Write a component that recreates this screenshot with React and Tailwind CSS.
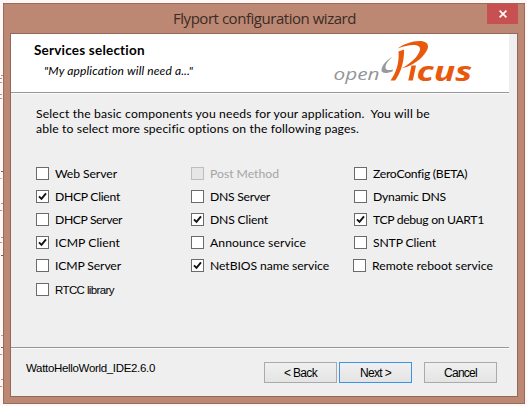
import { useLayoutEffect, useRef, useState } from "react";

// Tracks a label out so that it fills the given width.
function Label({ width, className = "", children }) {
  const ref = useRef(null);
  const [spacing, setSpacing] = useState(0);
  useLayoutEffect(() => {
    const natural = ref.current.getBoundingClientRect().width;
    setSpacing((width - natural) / children.length);
  }, []);
  return (
    <span ref={ref} className={`inline-block whitespace-pre ${className}`} style={{ letterSpacing: `${spacing}px` }}>
      {children}
    </span>
  );
}

const columns = [
  [
    { text: "Web Server", width: 62 },
    { text: "DHCP Client", width: 65, checked: true },
    { text: "DHCP Server", width: 67 },
    { text: "ICMP Client", width: 65, checked: true },
    { text: "ICMP Server", width: 66 },
    { text: "RTCC library", width: 59, plain: true },
  ],
  [
    { text: "Post Method", width: 69, disabled: true },
    { text: "DNS Server", width: 60 },
    { text: "DNS Client", width: 58, checked: true },
    { text: "Announce service", width: 96 },
    { text: "NetBIOS name service", width: 119, checked: true },
  ],
  [
    { text: "ZeroConfig (BETA)", width: 94 },
    { text: "Dynamic DNS", width: 73 },
    { text: "TCP debug on UART1", width: 111, checked: true },
    { text: "SNTP Client", width: 63 },
    { text: "Remote reboot service", width: 121, shifted: true },
  ],
];

function Option({ text, width, checked, disabled, plain, shifted }) {
  return (
    <div className={`flex h-[23px] items-start ${shifted ? "-ml-px" : ""} ${plain ? "mt-px" : ""}`}>
      <span
        className={`mr-[6px] flex h-[13px] w-[13px] shrink-0 items-center justify-center border ${
          disabled ? "border-[#bdbdbd] bg-[#e6e6e6]" : "border-[#6b6b6b] bg-white"
        }`}
      >
        {checked && (
          <svg className="h-[11px] w-[11px]" viewBox="0 0 11 11" fill="none">
            <path d="M2 5.3 4.500 7.800 9 2.400" stroke="#111" strokeWidth="1.9" />
          </svg>
        )}
      </span>
      <Label
        width={width}
        className={`${disabled ? "text-[#a5a5a5]" : "text-black"} ${
          plain
            ? "font-['Liberation_Sans',sans-serif] text-[11.5px] leading-[14px]"
            : "text-[12.2px] leading-[13px]"
        }`}
      >
        {text}
      </Label>
    </div>
  );
}

function Logo() {
  return (
    <svg className="h-[50px] w-[150px]" viewBox="330 38 150 50">
      <text x="332.5" y="80" textLength="46" lengthAdjust="spacingAndGlyphs" fontFamily="Open Sans, sans-serif" fontStyle="italic" fontSize="17" fill="#939598">
        open
      </text>
      <path d="M391.5 57C385 60 380.500 66 380.500 70C380.500 74 386 73.500 391.500 71.500L392 69.500C388 70.500 384.500 70.500 384.500 67.500C384.500 64 387.500 60 391.500 57Z" fill="#97999b" />
      <path d="M397.500 51.500L403 49.500C403.500 60 400 73 394 80.500H389.500C395 73 398.500 63 397.500 51.500Z" fill="#e8590c" />
      <path d="M396.500 48.500C403 43.500 414 40 421.500 41.200C428.500 42.500 428.500 48 423.500 54C418 61.500 409 66.500 400.500 68.500C410 63 417 57 419 50C420.500 43.500 409 43.500 396.500 48.500Z" fill="#e8590c" />
      <path d="M410.500 65.500H415L411.800 80.500H407.300Z" fill="#e8590c" />
      <text x="415.5" y="80.500" textLength="55.5" lengthAdjust="spacingAndGlyphs" fontFamily="Open Sans, sans-serif" fontStyle="italic" fontWeight="700" fontSize="27" fill="#e8590c">
        cus
      </text>
    </svg>
  );
}

function Divider() {
  return <div className="h-[2px] w-[498px] shrink-0 border-t border-[#979797] bg-[#fbfbfb]" />;
}

function Button({ children, width, primary, className = "" }) {
  return (
    <button
      className={`flex h-[21px] w-[73px] items-center justify-center border bg-linear-to-b from-[#f0f0f0] to-[#e4e4e4] text-[12px] text-black ${
        primary ? "border-[#3c92e5]" : "border-[#aaa]"
      } ${className}`}
    >
      <Label width={width}>{children}</Label>
    </button>
  );
}

// Slivers of the editor that show past the window's left edge.
const slivers = [
  { y: 75, color: "#b06a50" },
  { y: 78, color: "#b06a50" },
  { y: 82, color: "#b06a50" },
  { y: 94, color: "#b06a50" },
  { y: 98, color: "#b06a50" },
  { y: 171, color: "#333333" },
  { y: 178, color: "#d29a84" },
  { y: 203, color: "#b06a50" },
  { y: 210, color: "#b06a50" },
  { y: 237, color: "#b06a50" },
  { y: 242, color: "#b06a50" },
  { y: 255, color: "#333333" },
  { y: 335, color: "#6aa67a" },
  { y: 347, color: "#333333" },
  { y: 354, color: "#b06a50" },
  { y: 379, color: "#b06a50" },
  { y: 386, color: "#b06a50" },
];

export default function App() {
  return (
    <div className="flex h-[406px] w-[527px] overflow-hidden bg-[#fdf8f6] pt-[3px] font-[Lato,sans-serif]">
      <svg className="-mt-[3px] h-[406px] w-[3px] shrink-0" viewBox="0 0 3 406">
        {slivers.map(({ y, color }) => (
          <rect key={y} x={y % 2} y={y} width="2" height="1" fill={color} opacity="0.75" />
        ))}
      </svg>
      <div className="flex h-[401px] w-[522px] flex-col border border-[#9a6a5b] bg-[#bc8873] px-[7px]">
        <div className="flex h-[29px] shrink-0 justify-center">
          <div className="w-[44px]" />
          <div className="flex flex-1 justify-center pt-[4px] pl-[2px]">
            <Label width={183} className="font-['Open_Sans',sans-serif] text-[15px] leading-[20px] text-[#3b2b26]">
              Flyport configuration wizard
            </Label>
          </div>
          <div className="w-[45px]">
            <div className="ml-[15px] flex h-[20px] w-[31px] items-center justify-center bg-[#c75050]">
              <svg className="h-[8px] w-[8px]" viewBox="0 0 8 8">
                <path d="M.6.6 7.400 7.400M7.400.6.6 7.400" stroke="white" strokeWidth="1.6" />
              </svg>
            </div>
          </div>
        </div>
        <div className="flex h-[364px] w-[508px] shrink-0 -ml-px flex-col border border-[#93685a] bg-[#efefef]">
          <div className="flex h-[58px] w-[498px] shrink-0 justify-between bg-white pr-[28px]">
            <div className="flex flex-col items-start pl-[23px] pt-[7px] text-black">
              <Label width={111} className="text-[13.500px] font-bold leading-[18px]">
                Services selection
              </Label>
              <Label width={149} className="ml-[10px] mt-[3px] text-[12px] italic leading-[17px]">
                "My application will need a..."
              </Label>
            </div>
            <div className="pt-[4px]">
              <Logo />
            </div>
          </div>
          <Divider />
          <div className="flex flex-1 flex-col pl-[25px] pt-[12px]">
            <div className="flex h-[61px] flex-col items-start text-[12.2px] leading-[15px] text-black">
              <Label width={394}>{"Select the basic components you needs for your application.  You will be"}</Label>
              <Label width={323}>able to select more specific options on the following pages.</Label>
            </div>
            <div className="flex">
              <div className="w-[155px]">
                {columns[0].map((o) => <Option key={o.text} {...o} />)}
              </div>
              <div className="w-[163px]">
                {columns[1].map((o) => <Option key={o.text} {...o} />)}
              </div>
              <div>
                {columns[2].map((o) => <Option key={o.text} {...o} />)}
              </div>
            </div>
          </div>
          <Divider />
          <div className="flex h-[47px] shrink-0 pl-[15px] pt-[13px] font-['Liberation_Sans',sans-serif]">
            <div className="flex w-[238px] items-start">
              <Label width={129} className="text-[11.5px] leading-[12px] text-black">WattoHelloWorld_IDE2.6.0</Label>
            </div>
            <Button width={33}>{"< Back"}</Button>
            <Button width={31} primary className="ml-[2px]">{"Next >"}</Button>
            <Button width={33} className="ml-[12px]">Cancel</Button>
          </div>
        </div>
      </div>
    </div>
  );
}
